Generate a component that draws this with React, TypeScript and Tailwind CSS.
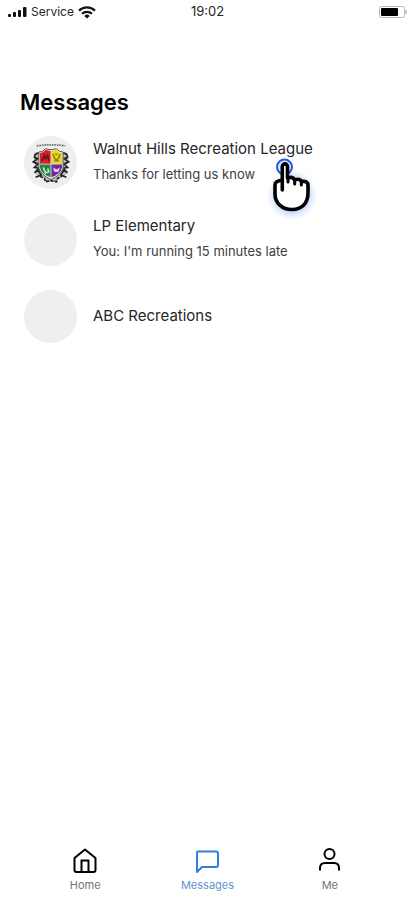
import type { ReactNode } from 'react'

type Conversation = {
  id: string
  name: string
  preview?: string
  avatar?: ReactNode
  pressed?: boolean
}

const conversations: Conversation[] = [
  {
    id: 'walnut-hills',
    name: 'Walnut Hills Recreation League',
    preview: 'Thanks for letting us know',
    avatar: <Crest />,
    pressed: true,
  },
  { id: 'lp-elementary', name: 'LP Elementary', preview: "You: I'm running 15 minutes late" },
  { id: 'abc-recreations', name: 'ABC Recreations' },
]

function StatusBar() {
  return (
    <header className="grid h-6 grid-cols-3 items-center px-2 text-xs text-neutral-800">
      <div className="flex items-center gap-1">
        <svg viewBox="0 0 19 11" className="h-[11px] w-[19px]" fill="#111" aria-hidden="true">
          <rect x="0" y="7" width="3" height="3" rx="1" />
          <rect x="5" y="5" width="3" height="5" rx="1" />
          <rect x="10" y="3" width="3" height="7" rx="1" />
          <rect x="15" y="0" width="3.5" height="10" rx="1" />
        </svg>
        <span>Service</span>
        <svg viewBox="0 0 18 13" className="h-[13px] w-[18px]" fill="none" stroke="#111" strokeWidth="2.2" aria-hidden="true">
          <path d="M1 4.6a11.5 11.5 0 0 1 16 0" />
          <path d="M4 7.8a7.2 7.2 0 0 1 10 0" />
          <path d="M9 12.6 6.3 9.9a3.9 3.9 0 0 1 5.4 0Z" fill="#111" stroke="none" />
        </svg>
      </div>
      <span className="text-center text-[13px]">19:02</span>
      <svg viewBox="0 0 28 12" className="h-3 w-7 justify-self-end" aria-hidden="true">
        <rect x="0.5" y="0.5" width="25" height="11" rx="2" fill="#fff" stroke="#bbb" />
        <rect x="2" y="2" width="17" height="8" rx="1" fill="#000" />
        <path d="M27 4v4" stroke="#bbb" strokeWidth="1.5" />
      </svg>
    </header>
  )
}

function Crest() {
  return (
    <svg viewBox="0 0 40 40" className="size-11" aria-hidden="true">
      <path d="M7 4.5Q20 2.500 33 4.500" fill="none" stroke="#777" strokeWidth="1.6" strokeDasharray="1.6 .7" />
      <path d="M8 12c-5 3-4 9 0 12-3 3-3 5-1 7l6 2 3 4h8l3-4 6-2c2-2 2-4-1-7 4-3 5-9 0-12" fill="#bdbdbd" />
      <g fill="none" stroke="#222" strokeWidth="1.6">
        <path d="M9 11c-3 0-4 2-4 4l3 1-4 3 4 2-3 3 5 1M31 11c3 0 4 2 4 4l-3 1 4 3-4 2 3 3-5 1" />
        <path d="m5 29 3-3 3 5-5 2M35 29l-3-3-3 5 5 2" />
        <path d="m10 32 4 2 1 3 5-1 5 1 1-3 4-2" strokeDasharray="3 1" />
      </g>
      <path d="M9 10q4 0 6-3 5 2 10 0 2 3 6 3v15q-2 6-11 10Q11 31 9 25Z" fill="#eee" stroke="#444" strokeWidth=".8" />
      <path d="M10 11q4-1 5-3 3 1 5 1v12H10Z" fill="#dd1d26" />
      <path d="M20 9q3 0 5-1 2 3 5 3v10H20Z" fill="#e9d619" />
      <path d="M10 21h10v12q-9-3-10-9Z" fill="#1c873f" />
      <path d="M20 21h10v3q-1 6-10 9Z" fill="#70289b" />
      <path d="M20 9v24M10 21h20" stroke="#ddd" strokeWidth=".8" />
      <path d="m12 18 2-5 1 3 2-3 1 5" fill="none" stroke="#65151a" strokeWidth="1.4" />
      <path d="M22 12q1 5 3 5t3-5M23 18h4M24 12h2" fill="none" stroke="#8d7922" strokeWidth="1.3" />
      <path d="m13 24 2 5 3-1-1-3" fill="none" stroke="#d7eadb" strokeWidth="1.4" />
      <path d="m22 24 1 4h4l1-4-3 2Z" fill="#e9daf0" />
    </svg>
  )
}

// Pointing hand with the tap ring under the fingertip
function TapPointer() {
  return (
    <svg viewBox="0 0 60 70" className="pointer-events-none absolute top-[14px] left-[236px] h-[70px] w-[60px] overflow-visible" aria-hidden="true">
      <defs>
        <filter id="tap-glow" x="-50%" y="-50%" width="200%" height="200%">
          <feGaussianBlur stdDeviation="3" />
        </filter>
      </defs>
      <ellipse cx="32" cy="45" rx="20" ry="20" fill="#a9c9ff" opacity=".75" filter="url(#tap-glow)" />
      <circle cx="24.5" cy="17" r="7.5" fill="#dce8ff" stroke="#2457f0" strokeWidth="2" />
      <path
        d="M22.300 40V16.500a2.600 2.600 0 0 1 5.200 0V28q5.500-2 7 2 5-2 7 1.500 6.500-1 6.500 4V43c0 10-6 16.500-16 16.500S15 53 15 44V35q0-4 7.300-5"
        fill="#fff"
        stroke="#000"
        strokeWidth="3.600"
        strokeLinecap="round"
        strokeLinejoin="round"
      />
      <path d="M28 28v4M34.700 30v4M41.300 32v3" stroke="#000" strokeWidth="3" strokeLinecap="round" />
    </svg>
  )
}

function ConversationRow({ name, preview, avatar, pressed }: Conversation) {
  return (
    <li className="relative">
      <button type="button" className="flex w-full items-center gap-4 text-left">
        <span className="flex size-[53px] shrink-0 items-center justify-center rounded-full bg-[#efefef]">
          {avatar}
        </span>
        <span className="flex flex-col gap-px pb-0.5">
          <span className="text-[15px] leading-6 text-neutral-800">{name}</span>
          {preview && <span className="text-[13px] leading-6 text-neutral-700">{preview}</span>}
        </span>
      </button>
      {pressed && <TapPointer />}
    </li>
  )
}

function HomeIcon() {
  return (
    <svg viewBox="0 0 26 26" className="size-[26px]" fill="none" stroke="currentColor" strokeWidth="2" strokeLinejoin="round" aria-hidden="true">
      <path d="M2.500 10 13 1.500 23.500 10v12q0 2-2 2h-17q-2 0-2-2Z" />
      <path d="M9.500 24V12.500h7V24" />
    </svg>
  )
}

function MessageIcon() {
  return (
    <svg viewBox="0 0 26 26" className="size-[26px]" fill="none" stroke="currentColor" strokeWidth="2" strokeLinejoin="round" aria-hidden="true">
      <path d="M4 3.500h18q2 0 2 2V17q0 2-2 2H8l-5 5V4.500q0-1 1-1Z" />
    </svg>
  )
}

function PersonIcon() {
  return (
    <svg viewBox="0 0 26 26" className="size-[26px]" fill="none" stroke="currentColor" strokeWidth="2" aria-hidden="true">
      <circle cx="12.500" cy="6" r="5" />
      <path d="M3 22.500v-2.500q0-5 5-5h9q5 0 5 5v2.500" />
    </svg>
  )
}

const tabs = [
  { label: 'Home', Icon: HomeIcon, active: false },
  { label: 'Messages', Icon: MessageIcon, active: true },
  { label: 'Me', Icon: PersonIcon, active: false },
]

function TabBar() {
  return (
    <nav className="mt-auto grid grid-cols-3 px-6 pb-[7px]">
      {tabs.map(({ label, Icon, active }) => (
        <a
          key={label}
          href="#"
          aria-current={active ? 'page' : undefined}
          className={`flex flex-col items-center gap-[3px] ${active ? 'text-[#2f7de1]' : 'text-black'}`}
        >
          <Icon />
          <span className={`text-[11px] leading-4 ${active ? 'text-[#5f93d0]' : 'text-neutral-500'}`}>{label}</span>
        </a>
      ))}
    </nav>
  )
}

export default function App() {
  return (
    <div className="flex min-h-screen flex-col bg-white font-['Inter',sans-serif]">
      <StatusBar />
      <main className="px-6 pt-16">
        <h1 className="-ml-1 text-[22px] leading-7 font-semibold text-black">Messages</h1>
        <ul className="mt-5 flex flex-col gap-6">
          {conversations.map((conversation) => (
            <ConversationRow key={conversation.id} {...conversation} />
          ))}
        </ul>
      </main>
      <TabBar />
    </div>
  )
}
